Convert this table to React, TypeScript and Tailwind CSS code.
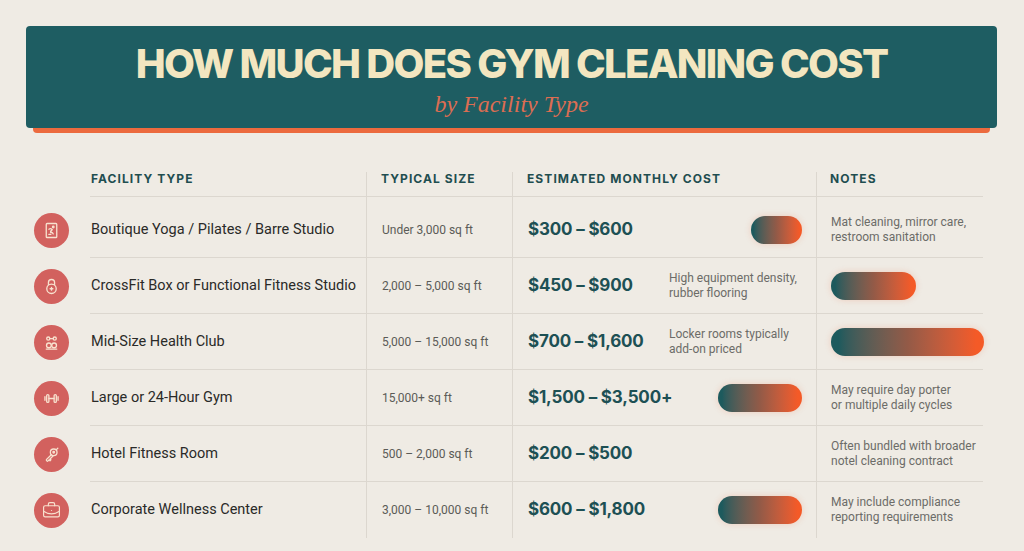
import { BriefcaseBusiness } from "lucide-react";
import type { ReactNode } from "react";

const sans = "font-['Inter','Liberation_Sans',sans-serif]";
const body = "font-['Roboto','Liberation_Sans',sans-serif]";

// Small line icons drawn in the cream stroke used on the red discs
function Glyph({ children }: { children: ReactNode }) {
  return (
    <svg
      width="21"
      height="21"
      viewBox="0 0 24 24"
      fill="none"
      stroke="currentColor"
      strokeWidth="1.5"
      strokeLinecap="round"
      strokeLinejoin="round"
    >
      {children}
    </svg>
  );
}

const icons: Record<string, ReactNode> = {
  yoga: (
    <Glyph>
      <rect x="6" y="4" width="12" height="16" rx="1" />
      <circle cx="14" cy="8" r="0.9" />
      <path d="M9 10.5c1.3-.9 2.9-.6 3.9.5-1.4 1-2.4 2.2-1.7 3.5 1-.4 2.2 0 2.8 1.4" />
      <path d="M9 16.5h2.2" />
    </Glyph>
  ),
  kettlebell: (
    <Glyph>
      <path d="M8.5 9.8V7.5a3.5 3.5 0 0 1 7 0v2.3" />
      <circle cx="12" cy="14.6" r="5.4" />
      <path d="M12 13v3.2M10.4 14.6h3.2" />
    </Glyph>
  ),
  club: (
    <Glyph>
      <path d="M10 7.5h4" />
      <circle cx="8.3" cy="7.5" r="1.8" />
      <circle cx="15.7" cy="7.5" r="1.8" />
      <circle cx="9" cy="15.3" r="2.7" />
      <circle cx="15" cy="15.3" r="2.7" />
      <path d="M6 19.5h12" />
    </Glyph>
  ),
  dumbbell: (
    <Glyph>
      <path d="M9 12h6" />
      <rect x="6.5" y="7.5" width="2.5" height="9" rx="1.2" />
      <rect x="15" y="7.5" width="2.5" height="9" rx="1.2" />
      <path d="M4.5 10v4M19.5 10v4" />
    </Glyph>
  ),
  key: (
    <Glyph>
      <circle cx="14.5" cy="9.5" r="3.8" />
      <circle cx="14.5" cy="9.5" r="0.9" />
      <path d="M17.6 6.4l1.6-1.6" />
      <path d="M11.8 12.2l-5.4 5.4a1 1 0 0 0 0 1.4l.3.3a1 1 0 0 0 1.4 0l1.2-1.2 1 1 1-1-1-1 3.4-3.4" />
    </Glyph>
  ),
  briefcase: <BriefcaseBusiness size={19} strokeWidth={1.5} />,
};

interface Row {
  icon: string;
  name: string;
  size: string;
  cost: string;
  costNote?: [string, string];
  costBar?: number;
  notesBar?: number;
  notes?: [string, string];
}

const rows: Row[] = [
  {
    icon: "yoga",
    name: "Boutique Yoga / Pilates / Barre Studio",
    size: "Under 3,000 sq ft",
    cost: "$300 – $600",
    costBar: 51,
    notes: ["Mat cleaning, mirror care,", "restroom sanitation"],
  },
  {
    icon: "kettlebell",
    name: "CrossFit Box or Functional Fitness Studio",
    size: "2,000 – 5,000 sq ft",
    cost: "$450 – $900",
    costNote: ["High equipment density,", "rubber flooring"],
    notesBar: 85,
  },
  {
    icon: "club",
    name: "Mid-Size Health Club",
    size: "5,000 – 15,000 sq ft",
    cost: "$700 – $1,600",
    costNote: ["Locker rooms typically", "add-on priced"],
    notesBar: 153,
  },
  {
    icon: "dumbbell",
    name: "Large or 24-Hour Gym",
    size: "15,000+ sq ft",
    cost: "$1,500 – $3,500+",
    costBar: 84,
    notes: ["May require day porter", "or multiple daily cycles"],
  },
  {
    icon: "key",
    name: "Hotel Fitness Room",
    size: "500 – 2,000 sq ft",
    cost: "$200 – $500",
    notes: ["Often bundled with broader", "notel cleaning contract"],
  },
  {
    icon: "briefcase",
    name: "Corporate Wellness Center",
    size: "3,000 – 10,000 sq ft",
    cost: "$600 – $1,800",
    costBar: 84,
    notes: ["May include compliance", "reporting requirements"],
  },
];

function Bar({ width }: { width: number }) {
  return (
    <div
      className="h-[28px] shrink-0 rounded-full bg-linear-to-r from-[#1d5a5d] from-5% via-[#935a47] to-[#f45a27] to-95% shadow-[0_0_6px_rgba(240,110,70,0.25)]"
      style={{ width }}
    />
  );
}

function TwoLines({ lines }: { lines: [string, string] }) {
  return (
    <div className={`${body} text-[12px] leading-[15px] whitespace-nowrap text-[#6c6c68]`}>
      <div>{lines[0]}</div>
      <div>{lines[1]}</div>
    </div>
  );
}

const head = "text-[12px] leading-[14px] font-bold tracking-[0.09em] text-[#1f4e50]";

export default function App() {
  return (
    <div className={`min-h-[551px] w-[1024px] bg-[#efebe4] pt-[26px] ${sans}`}>
      {/* banner */}
      <div className="ml-[26px] w-[971px]">
        <div className="flex h-[102px] flex-col items-center rounded-[4px] bg-[#1e5d62] pt-[18px]">
          <h1 className="text-[40px] leading-none font-extrabold tracking-[-0.042em] whitespace-nowrap text-[#f3e6c0]">
            HOW MUCH DOES GYM CLEANING COST
          </h1>
          <div className="mt-[8px] font-['Liberation_Serif',serif] text-[24px] leading-none text-[#dc6d52] italic">
            by Facility Type
          </div>
        </div>
        <div className="mx-[7px] h-[5px] rounded-b-[4px] bg-[#ec6a3e]" />
      </div>

      {/* table */}
      <div className="mt-[39px] ml-[34px] grid w-[949px] grid-cols-[56px_276px_146px_304px_167px] grid-rows-[25px_61px_56px_56px_56px_56px_56px]">
        <div />
        <div className={`border-b border-[#dcd7cf] pl-px ${head}`}>FACILITY TYPE</div>
        <div className={`border-b border-l border-[#dcd7cf] pl-[14px] ${head}`}>TYPICAL SIZE</div>
        <div className={`border-b border-l border-[#dcd7cf] pl-[14px] ${head}`}>ESTIMATED MONTHLY COST</div>
        <div className={`border-b border-l border-[#dcd7cf] pl-[13px] ${head}`}>NOTES</div>

        {rows.map((r, i) => {
          const first = i === 0;
          const last = i === rows.length - 1;
          const cell = `flex items-center border-[#dcd7cf] ${first ? "pt-[5px]" : ""} ${last ? "" : "border-b"}`;
          return (
            <div key={r.name} className="contents">
              <div className={`flex items-center ${first ? "pt-[5px]" : ""}`}>
                <div className="flex h-[35px] w-[35px] items-center justify-center rounded-full bg-[#d2615e] text-[#f8e2cf]">
                  {icons[r.icon]}
                </div>
              </div>
              <div className={`${cell} ${body} pl-px text-[14.5px] whitespace-nowrap text-[#2a2a28]`}>{r.name}</div>
              <div className={`${cell} ${body} border-l pl-[15px] text-[12px] whitespace-nowrap text-[#5b5b57]`}>
                {r.size}
              </div>
              <div className={`${cell} border-l pr-[14px] pl-[15px]`}>
                <div className="w-[141px] shrink-0 text-[17px] font-bold tracking-[-0.01em] whitespace-nowrap text-[#1d5054]">
                  {r.cost}
                </div>
                {r.costNote && <TwoLines lines={r.costNote} />}
                {r.costBar && (
                  <div className="flex flex-1 justify-end">
                    <Bar width={r.costBar} />
                  </div>
                )}
              </div>
              <div className={`${cell} border-l pl-[14px]`}>
                {r.notes && <TwoLines lines={r.notes} />}
                {r.notesBar && <Bar width={r.notesBar} />}
              </div>
            </div>
          );
        })}
      </div>
    </div>
  );
}
